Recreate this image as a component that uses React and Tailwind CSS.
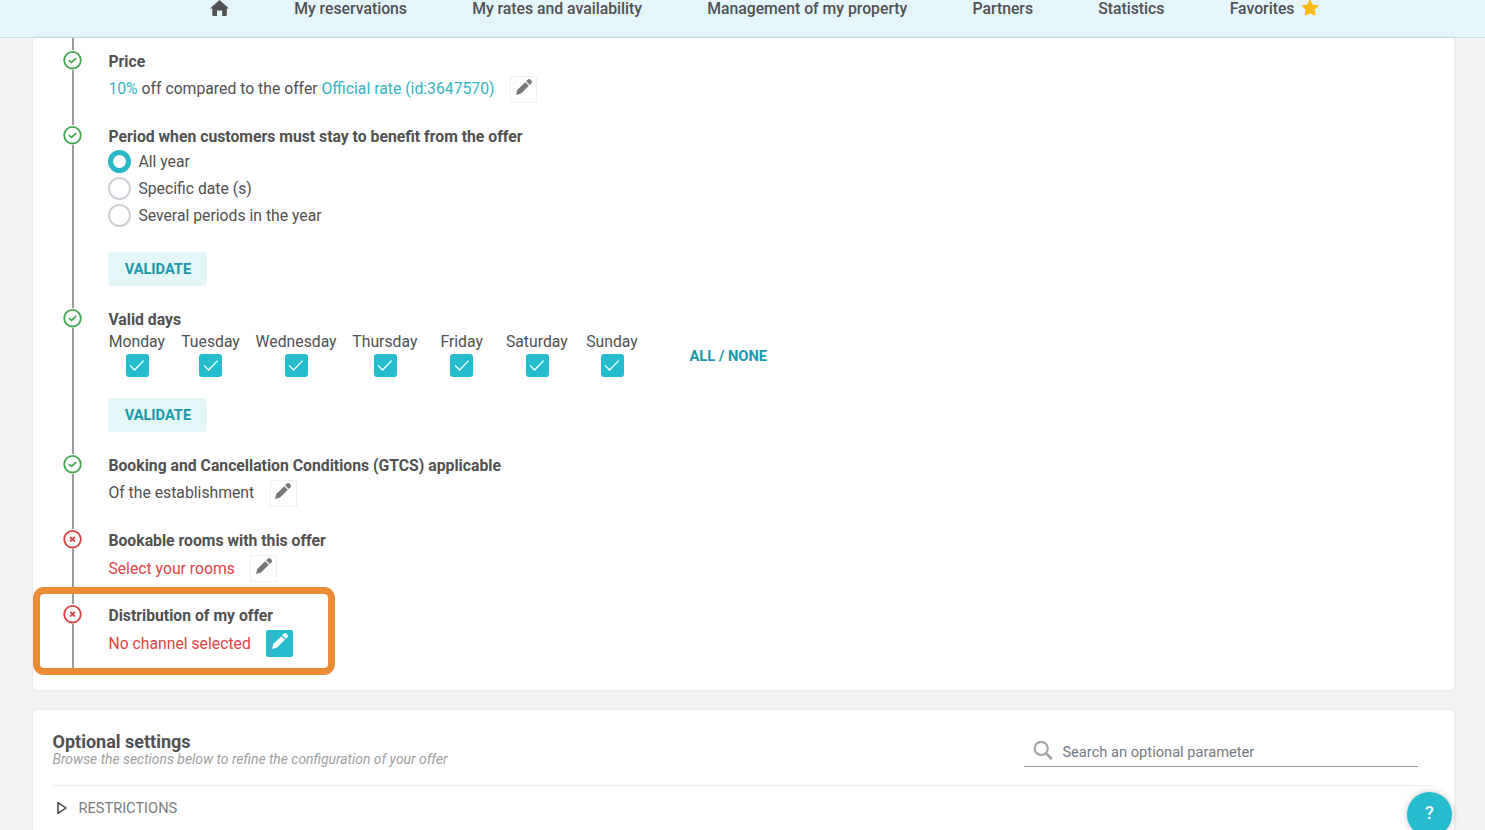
import { useState } from "react";

const NAV_ITEMS = [
  "My reservations",
  "My rates and availability",
  "Management of my property",
  "Partners",
  "Statistics",
];

const DAYS = ["Monday", "Tuesday", "Wednesday", "Thursday", "Friday", "Saturday", "Sunday"];

const PERIODS = ["All year", "Specific date (s)", "Several periods in the year"];

function PencilIcon({ className }) {
  return (
    <svg viewBox="0 0 18 18" className={className} fill="currentColor">
      <path d="M1 17l1.4-5.2 7.9-7.6 3.6 3.6-7.8 7.8z" />
      <path d="M11.1 3.3l1.5-1.5a2.2 2.2 0 0 1 3.1 0l.6.6a2.2 2.2 0 0 1 0 3.1L14.8 7z" />
    </svg>
  );
}

function StatusIcon({ ok }) {
  return (
    <svg
      viewBox="0 0 20 20"
      fill="none"
      strokeWidth="1.8"
      className={`h-5 w-5 shrink-0 ${ok ? "stroke-[#43a84f]" : "stroke-[#dc4242]"}`}
    >
      <circle cx="9.5" cy="10.2" r="8.3" />
      {ok ? <path d="M5.8 10.1l2.7 2.3 4.7-4.3" /> : <path d="M7.1 7.8l4.8 4.8M11.9 7.8l-4.8 4.8" />}
    </svg>
  );
}

function Step({ ok, title, className, children }) {
  return (
    <section className={`flex ${className}`}>
      <div className="flex w-5 shrink-0 flex-col items-center">
        <StatusIcon ok={ok} />
        <div className="w-[2px] flex-1 bg-[#9c9c9c]" />
      </div>
      <div className="ml-[25.4px] pt-[1px]">
        <h2 className="font-bold leading-[22px]">{title}</h2>
        {children}
      </div>
    </section>
  );
}

function EditButton({ active }) {
  return (
    <button
      className={`flex h-[27px] w-[27px] justify-center ${
        active ? "rounded-[2px] bg-[#25bccd] pt-[2px] text-white" : "border border-[#f0f0f0] pt-[1px] text-[#777]"
      }`}
    >
      <PencilIcon className="h-[18px] w-[18px]" />
    </button>
  );
}

function ValidateButton({ className }) {
  return (
    <button
      className={`block h-[34px] w-[99px] rounded-[4px] bg-[#e3f6f8] pt-[1px] text-[14.6px] font-bold text-[#1b98aa] ${className}`}
    >
      VALIDATE
    </button>
  );
}

export default function App() {
  const [period, setPeriod] = useState("All year");
  const [days, setDays] = useState(DAYS);

  const toggleDay = (day) =>
    setDays((prev) => (prev.includes(day) ? prev.filter((d) => d !== day) : [...prev, day]));

  return (
    <div className="relative h-[830px] w-[1485px] overflow-hidden bg-[#f2f2f2] font-['Roboto',sans-serif] text-[15.75px] text-[#505152]">
      {/* Top navigation */}
      <header className="flex h-[38px] items-start gap-[65.2px] border-b border-[#c5e2e9] bg-[#e4f6f9] pl-[210px] font-medium leading-[18px]">
        <svg viewBox="0 0 19 17" className="h-[17px] w-[19px] shrink-0" fill="currentColor">
          <path d="M9.5 0L19 8.6h-2.2V15q0 1-1 1h-3.6v-5.4H7V16H3.3q-1 0-1-1V8.6H0z" />
        </svg>
        {NAV_ITEMS.map((item) => (
          <a key={item} className="whitespace-nowrap">
            {item}
          </a>
        ))}
        <a className="flex whitespace-nowrap">
          Favorites
          <svg viewBox="0 0 20 20" className="-mt-[2px] ml-[6px] h-5 w-5" fill="#fdbc10">
            <path
              d="M10 2l2.5 5 5.4.8-3.9 3.9.9 5.6L10 14.7l-4.9 2.6.9-5.6-3.9-3.9L7.5 7z"
              stroke="#fdbc10"
              strokeLinejoin="round"
            />
          </svg>
        </a>
      </header>

      {/* Offer steps */}
      <main className="ml-[33px] h-[652px] w-[1421px] rounded-b-[4px] bg-white pl-[30px] shadow-[0_0_3px_rgba(0,0,0,0.1)]">
        <div className="flex h-[12px] w-5 justify-center">
          <div className="w-[2px] bg-[#9c9c9c]" />
        </div>

        <Step ok title="Price" className="h-[75px]">
          <div className="mt-[3px] flex items-center">
            <p className="mr-[15.5px] pb-[2px]">
              <span className="text-[#35b5c5]">10%</span> off compared to the offer{" "}
              <span className="text-[#35b5c5]">Official rate (id:3647570)</span>
            </p>
            <EditButton />
          </div>
        </Step>

        <Step ok title="Period when customers must stay to benefit from the offer" className="h-[183px]">
          <div className="mt-[2px]">
            {PERIODS.map((p) => (
              <label key={p} className="flex h-[27px] items-start" onClick={() => setPeriod(p)}>
                <span
                  className={`mr-[7px] h-[23px] w-[23px] rounded-full ${
                    period === p ? "border-[5px] border-[#2ab8c8]" : "border-2 border-[#ced0d8]"
                  }`}
                />
                <span className="leading-[24px]">{p}</span>
              </label>
            ))}
          </div>
          <ValidateButton className="mt-[21px]" />
        </Step>

        <Step ok title="Valid days" className="h-[146px]">
          <div className="flex items-center">
            <div className="flex gap-[15.8px]">
              {DAYS.map((day) => (
                <label key={day} className="flex min-w-[57px] flex-col items-center" onClick={() => toggleDay(day)}>
                  <span className="leading-[22px]">{day}</span>
                  <span className="mt-[1px] ml-[0.4px] flex h-[23px] w-[23px] items-center justify-center rounded-[3px] bg-[#25bccd]">
                    {days.includes(day) && (
                      <svg viewBox="0 0 16 14" className="h-[14px] w-4" fill="none" stroke="white" strokeWidth="1.3">
                        <path d="M1 6.4l4.6 4.6L14.6 1.6" />
                      </svg>
                    )}
                  </span>
                </label>
              ))}
            </div>
            <button
              className="ml-[49px] pt-[4px] text-[14.7px] font-bold text-[#1b98aa]"
              onClick={() => setDays(days.length ? [] : DAYS)}
            >
              ALL / NONE
            </button>
          </div>
          <ValidateButton className="mt-[21px]" />
        </Step>

        <Step ok title="Booking and Cancellation Conditions (GTCS) applicable" className="h-[75px]">
          <div className="mt-[3px] flex items-center">
            <p className="mr-[15.5px] pb-[2px]">Of the establishment</p>
            <EditButton />
          </div>
        </Step>

        <Step title="Bookable rooms with this offer" className="h-[75px]">
          <div className="mt-[3px] flex items-center">
            <p className="mr-[15.5px] text-[#e04444]">Select your rooms</p>
            <EditButton />
          </div>
        </Step>

        <Step title="Distribution of my offer" className="h-[64px]">
          <div className="mt-[3px] flex items-center">
            <p className="mr-[15.3px] text-[#e04444]">No channel selected</p>
            <EditButton active />
          </div>
        </Step>
      </main>

      {/* Optional settings */}
      <section className="ml-[33px] mt-5 h-[140px] w-[1421px] rounded-t-[4px] bg-white pl-[19.5px] pr-5 shadow-[0_0_3px_rgba(0,0,0,0.1)]">
        <div className="flex h-[76px] justify-between border-b border-[#ececec]">
          <div className="pt-[22px]">
            <h2 className="text-[18px] font-bold leading-5">Optional settings</h2>
            <p className="text-[13.9px] italic leading-[15px] text-[#a0a0a0]">
              Browse the sections below to refine the configuration of your offer
            </p>
          </div>
          <div className="mr-4 mt-[27px] flex h-[30px] w-[394px] border-b border-[#9a9ea2] pl-[9px]">
            <svg viewBox="0 0 20 20" className="mt-[3px] h-5 w-5" fill="none" stroke="#a3a3a3" strokeWidth="2.2">
              <circle cx="8.2" cy="8.4" r="6.6" />
              <path d="M12.8 13l6 6" strokeWidth="2.6" />
            </svg>
            <input
              placeholder="Search an optional parameter"
              className="ml-[9.4px] h-[29px] flex-1 text-[14.67px] outline-none placeholder:text-[#737b83]"
            />
          </div>
        </div>
        <div className="flex items-center pl-1 pt-[10px] text-[14.6px] leading-[22px] text-[#7d7d7d]">
          <svg viewBox="0 0 10 14" className="mr-3 h-[14px] w-[10px]" fill="none" stroke="#444" strokeWidth="1.5">
            <path d="M1 1.6v10.8L9 7z" strokeLinejoin="round" />
          </svg>
          <span className="pt-[1px]">RESTRICTIONS</span>
        </div>
      </section>

      {/* Highlight around the distribution step */}
      <div className="absolute left-[33px] top-[587px] h-[88px] w-[302px] rounded-[11px] border-[7px] border-[#ea8b36]" />

      <button className="absolute left-[1407px] top-[792px] flex h-[45px] w-[45px] justify-center rounded-full bg-[#25bccd] pt-[9px] text-[18px] font-medium leading-6 text-white shadow-[0_0_6px_rgba(0,0,0,0.25)]">
        ?
      </button>
    </div>
  );
}
